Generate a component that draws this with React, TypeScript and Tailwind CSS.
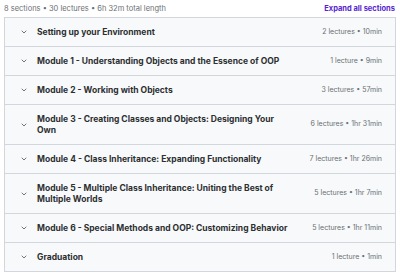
import { ChevronDown } from "lucide-react";

const sections = [
  { title: "Setting up your Environment", meta: "2 lectures • 10min" },
  { title: "Module 1 - Understanding Objects and the Essence of OOP", meta: "1 lecture • 9min" },
  { title: "Module 2 - Working with Objects", meta: "3 lectures • 57min" },
  { title: "Module 3 - Creating Classes and Objects: Designing Your Own", meta: "6 lectures • 1hr 31min" },
  { title: "Module 4 - Class Inheritance: Expanding Functionality", meta: "7 lectures • 1hr 26min" },
  { title: "Module 5 - Multiple Class Inheritance: Uniting the Best of Multiple Worlds", meta: "5 lectures • 1hr 7min" },
  { title: "Module 6 - Special Methods and OOP: Customizing Behavior", meta: "5 lectures • 1hr 11min" },
  { title: "Graduation", meta: "1 lecture • 1min" },
];

export default function App() {
  return (
    <div className="w-[400px] h-[279px] overflow-hidden bg-white px-[4px] font-['Inter',_sans-serif] text-[#2d2f31]">
      <div className="flex items-center justify-between h-[17px] pr-[1px]">
        <span className="text-[7.5px] text-[#6a6f73]">8 sections • 30 lectures • 6h 32m total length</span>
        <button className="text-[7.5px] font-bold text-[#5624d0]">Expand all sections</button>
      </div>
      <div className="border border-[#d1d7dc]">
        {sections.map((s, i) => (
          <div
            key={i}
            className={`flex items-center bg-[#f7f9fa] pl-[15px] pr-[13px] py-[8.5px] ${i > 0 ? "border-t border-[#d1d7dc]" : ""}`}
          >
            <ChevronDown size={8} strokeWidth={2} className="shrink-0 text-[#2d2f31] mr-[9px]" />
            <div className="flex-1 text-[8.5px] font-bold leading-[11px] pr-[16px]">{s.title}</div>
            <div className="shrink-0 text-[7px] text-[#6a6f73]">{s.meta}</div>
          </div>
        ))}
      </div>
    </div>
  );
}
